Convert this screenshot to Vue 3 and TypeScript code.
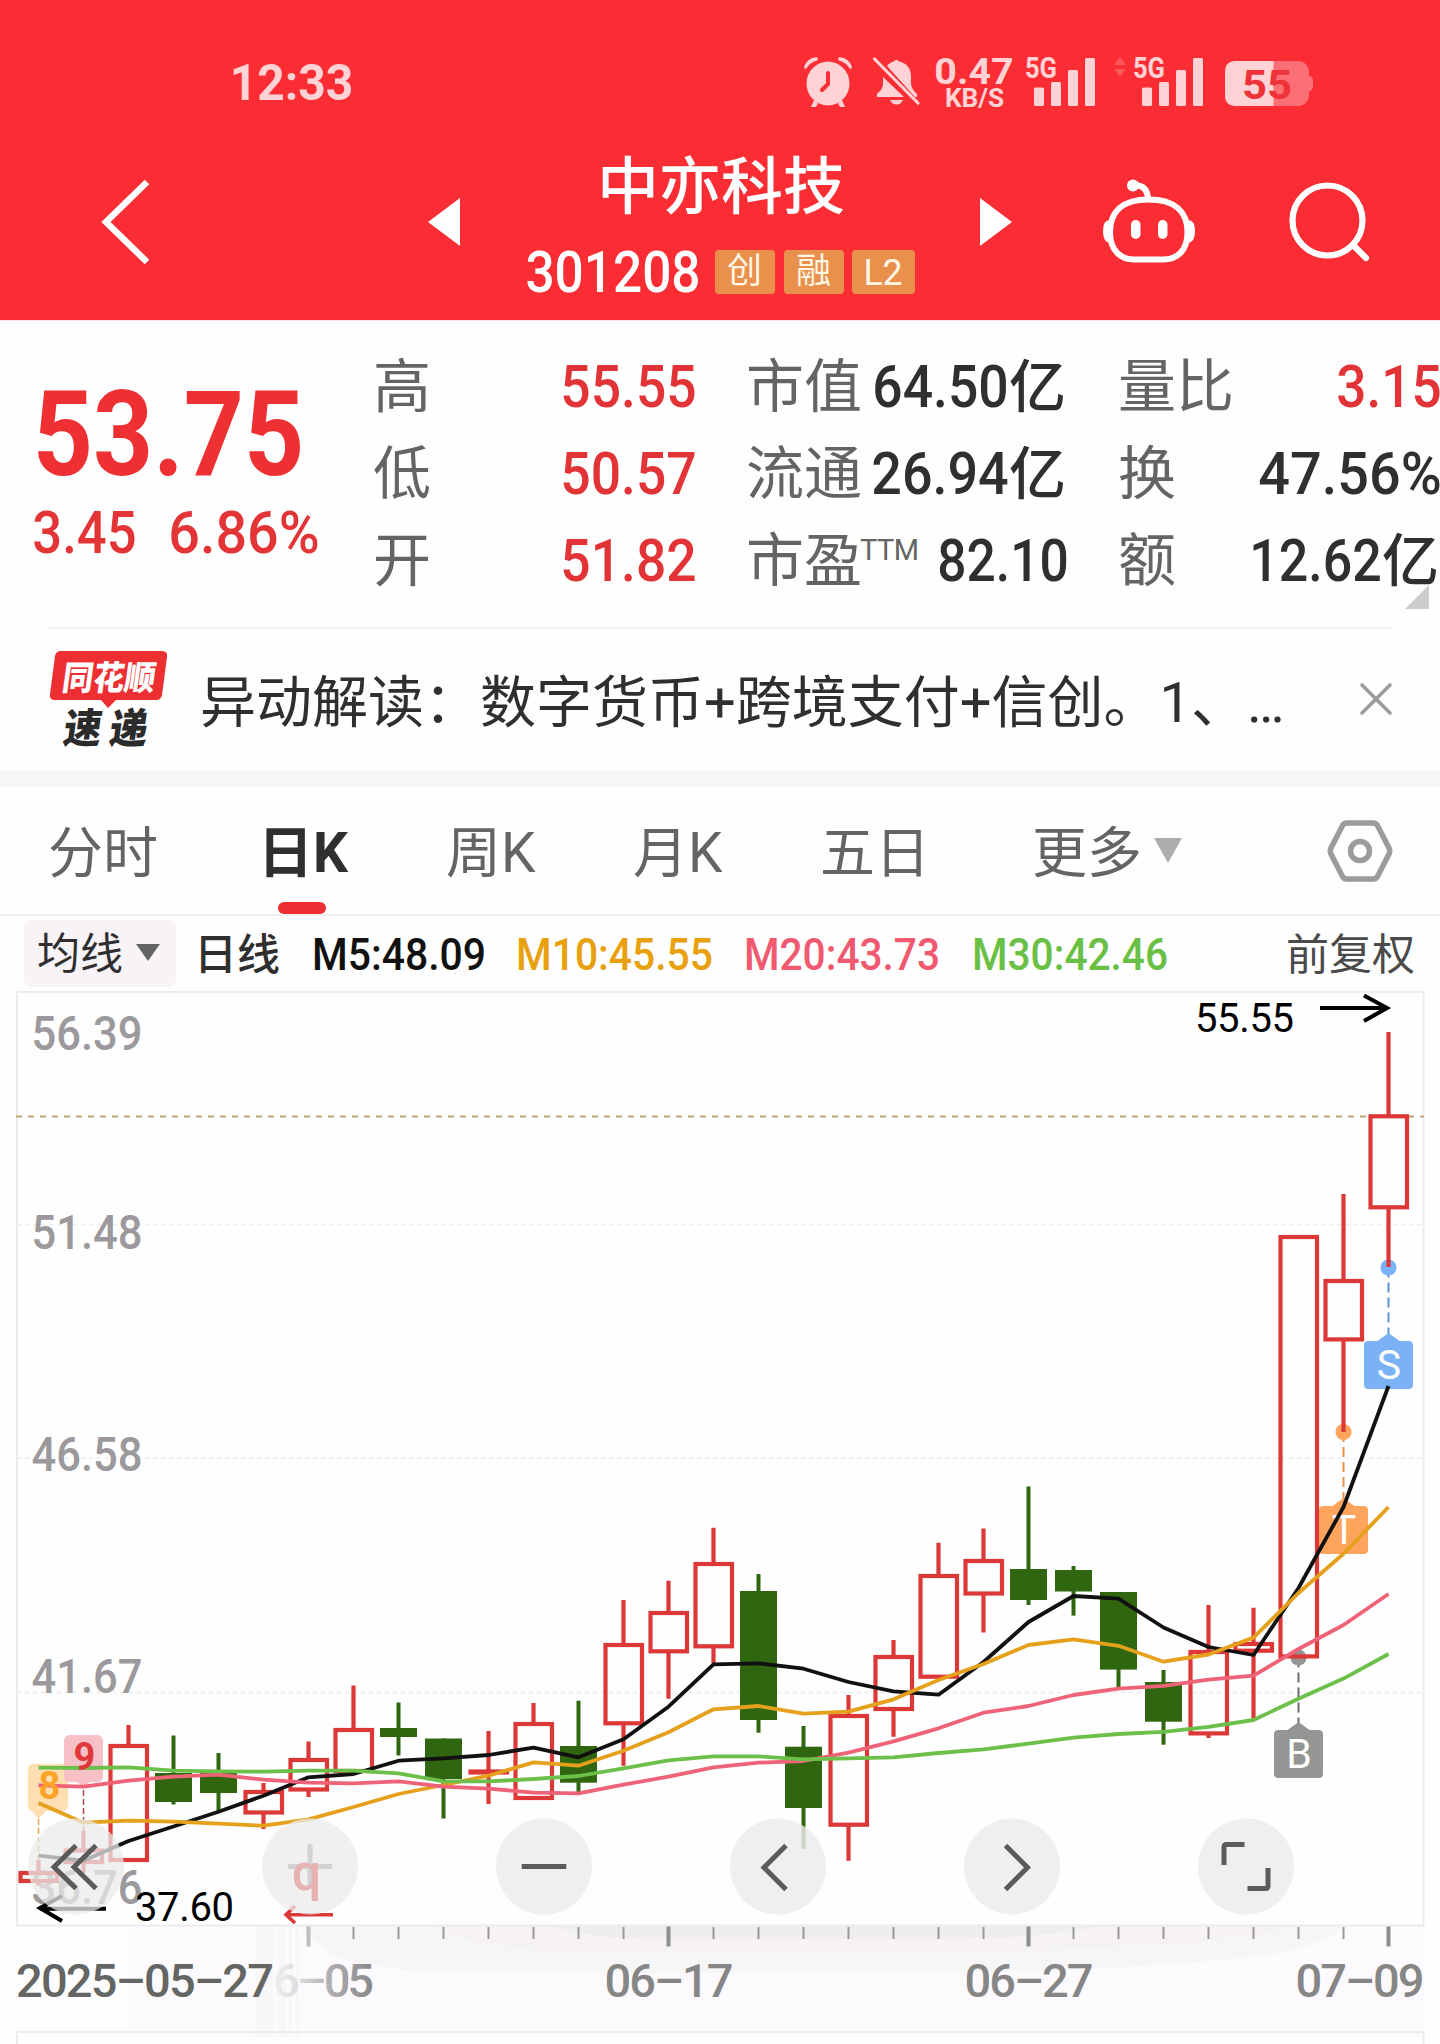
<script setup lang="ts">
import { h, type FunctionalComponent } from 'vue'

interface FitProps { text: string; w: number; size: number }

// Single line of Latin text set to an exact ink width; the box is the cap height.
const Fit: FunctionalComponent<FitProps> = (p) => {
  const cap = p.size * 0.711
  const side = p.size * 0.045
  return h('svg', { width: p.w, height: cap, style: { overflow: 'visible', display: 'inline-block', flex: 'none' } }, [
    h('text', {
      x: -side, y: cap, 'font-size': p.size, textLength: p.w + side * 2,
      lengthAdjust: 'spacingAndGlyphs', fill: 'currentColor',
    }, p.text),
  ])
}
Fit.props = ['text', 'w', 'size']

const highs = [
  { label: '高', value: '55.55' },
  { label: '低', value: '50.57' },
  { label: '开', value: '51.82' },
]
const caps = [
  { label: '市值', sup: '', value: '64.50', w: 131, unit: '亿' },
  { label: '流通', sup: '', value: '26.94', w: 132, unit: '亿' },
  { label: '市盈', sup: 'TTM', value: '82.10', w: 126, unit: '' },
]
const ratios = [
  { label: '量比', value: '3.15', w: 100, unit: '', up: true },
  { label: '换', value: '47.56%', w: 178, unit: '', up: false },
  { label: '额', value: '12.62', w: 127, unit: '亿', up: false },
]
const tabs = ['分时', '日K', '周K', '月K', '五日']
const averages = [
  { text: 'M5:48.09', w: 170, c: '#111111', gap: 34 },
  { text: 'M10:45.55', w: 193, c: '#e8a00c', gap: 35 },
  { text: 'M20:43.73', w: 192, c: '#f0596f', gap: 36 },
  { text: 'M30:42.46', w: 192, c: '#69c044', gap: 0 },
]

const px = (i: number): number => 38.5 + 45 * i

// [up, high, bodyTop, bodyBottom, low]
type Candle = [boolean, number, number, number, number]
const candles: Candle[] = [
  [true, 1860, 1871, 1883, 1885.5], [true, 1831, 1848.5, 1864, 1873], [true, 1725, 1744, 1862, 1862],
  [false, 1735.5, 1773, 1802, 1804.5], [false, 1753, 1773, 1793, 1811], [true, 1783, 1790, 1814.5, 1829],
  [true, 1741.5, 1758, 1791.5, 1797], [true, 1685.5, 1728, 1773, 1773], [false, 1702.5, 1728, 1737, 1755.5],
  [false, 1738.5, 1738.5, 1779, 1818.5], [true, 1731, 1769.5, 1774, 1804], [true, 1703, 1722, 1800, 1800],
  [false, 1700.7, 1746, 1782.7, 1792], [true, 1600, 1643, 1725.3, 1765.7], [true, 1580.7, 1611, 1653.3, 1698.7],
  [true, 1527.7, 1562, 1648.3, 1663], [false, 1574, 1591, 1720, 1732.7], [false, 1726, 1746.7, 1808, 1848.7],
  [true, 1695, 1714, 1826.7, 1860.7], [true, 1640, 1655, 1711, 1736.7], [true, 1542.7, 1574, 1678.7, 1678.7],
  [true, 1528.6, 1559, 1595.5, 1632.5], [false, 1486.5, 1569, 1600, 1605], [false, 1566, 1570, 1591.5, 1615.6],
  [false, 1592, 1592, 1669.6, 1687.5], [false, 1670, 1682, 1721.7, 1744.7], [true, 1605, 1650, 1735.4, 1738],
  [true, 1607.7, 1642, 1652.7, 1718], [true, 1235, 1235, 1658.4, 1658.4], [true, 1194, 1279, 1341.4, 1432],
  [true, 1032, 1114.3, 1209.3, 1267],
]

const lines: { c: string; ys: number[] }[] = [
  { c: '#111111', ys: [1855.7, 1860.7, 1841, 1826.5, 1811.7, 1795.7, 1777.3, 1774, 1760.7, 1758.3, 1755, 1747.6, 1757.3, 1739.3, 1706.7, 1664.3, 1663.3, 1668.7, 1682, 1691.3, 1694.7, 1662, 1622, 1596, 1598.7, 1627.5, 1647, 1655, 1588, 1507, 1386] },
  { c: '#e5a01c', ys: [1803, 1822.7, 1820.7, 1821.7, 1823.7, 1825.7, 1819.3, 1807, 1794, 1785, 1775.7, 1762.4, 1765.7, 1750.7, 1732.3, 1709.3, 1706, 1713.7, 1711.7, 1699.3, 1680, 1664, 1645, 1639.4, 1645.8, 1661.7, 1654.5, 1637.6, 1593, 1553.7, 1507] },
  { c: '#ef6378', ys: [1785.3, 1786.7, 1780.7, 1776.7, 1774.7, 1779.7, 1782.7, 1783.3, 1781.3, 1786.7, 1788.6, 1792.6, 1793.3, 1784.7, 1776.7, 1767.3, 1762.7, 1761, 1752.7, 1741.3, 1728.3, 1712.7, 1706, 1695, 1688.6, 1685.8, 1679.6, 1675.7, 1649, 1625, 1594] },
  { c: '#6cc04a', ys: [1767.7, 1768, 1767.3, 1770.7, 1771.3, 1771.7, 1770.7, 1770.7, 1773.3, 1781.3, 1781.4, 1779, 1776, 1768.3, 1760.3, 1756.3, 1756.3, 1759.3, 1758.3, 1757.3, 1753, 1749.4, 1743.7, 1737.6, 1734, 1731.8, 1726.8, 1720, 1698.7, 1678.6, 1654] },
]
const points = (ys: number[]): string => ys.map((y, i) => `${px(i)},${y}`).join(' ')

const signals = [
  { t: 'S', x: 1388.5, dot: 1267.5, top: 1341, fill: '#7bb1f5', dash: '#5b93d6' },
  { t: 'T', x: 1343.5, dot: 1432, top: 1506, fill: '#ffa45c', dash: '#e8924c' },
  { t: 'B', x: 1298.5, dot: 1657.5, top: 1730, fill: '#949694', dash: '#6d6d6d' },
]
const prices = [
  { t: '56.39', y: 1050 }, { t: '51.48', y: 1249 }, { t: '46.58', y: 1471 },
  { t: '41.67', y: 1693 }, { t: '36.76', y: 1904 },
]
const grid = [1224.5, 1458, 1692.5]
const ticks = Array.from({ length: 25 }, (_, k) => k + 6)
const dates = [
  { t: '06–17', x: 606 }, { t: '06–27', x: 966 }, { t: '07–09', x: 1297 },
]
const buttons = [76, 310, 544, 778, 1012, 1246]
</script>

<template>
  <div class="page">
    <header class="head">
      <div class="status">
        <Fit class="time" text="12:33" :w="119" :size="50" />
        <svg class="alarm" width="48" height="50" viewBox="0 0 48 50">
          <ellipse cx="24" cy="26.500" rx="21.500" ry="22" />
          <path d="M0 11 Q2 1 13 0 L14 3 Q5 6 2 12Z M48 11 Q46 1 35 0 L34 3 Q43 6 46 12Z" />
          <path d="M10 43 L7 50 H12 L14 46Z M38 43 L41 50 H36 L34 46Z" />
          <path d="M24 16 V27 L18 33" fill="none" stroke="#f92d33" stroke-width="4" stroke-linecap="round" stroke-linejoin="round" />
        </svg>
        <svg class="bell" width="48" height="50" viewBox="0 0 48 50">
          <path d="M10 20 L31 40 H4 Q3 37 6 35 Q10 32 10 26Z" />
          <path d="M14 9 Q17 5 21 4.500 Q23 1 26 4.500 Q38 7 38 20 V27 Q39 33 44 37 V40 H42Z" />
          <path d="M17 43 H30 Q28 47.500 23.500 47.500 Q19 47.500 17 43Z" />
          <path d="M1.500 2 L45 46" fill="none" stroke="#ffd3d5" stroke-width="3.200" stroke-linecap="round" />
        </svg>
        <div class="net">
          <Fit text="0.47" :w="76" :size="37" />
          <Fit text="KB/S" :w="57" :size="25" />
        </div>
        <svg class="sig" width="69" height="50" viewBox="0 0 69 50">
          <text x="-1" y="21" font-size="30" textLength="32" lengthAdjust="spacingAndGlyphs">5G</text>
          <rect x="8" y="30.500" width="10" height="18.500" rx="1.500" /><rect x="25" y="25" width="10" height="24" rx="1.500" />
          <rect x="42" y="13" width="10" height="36" rx="1.500" /><rect x="59" y="1" width="10" height="48" rx="1.500" />
        </svg>
        <svg class="updown" width="12" height="50" viewBox="0 0 12 50">
          <path d="M0 8 L6 0 L12 8Z M0 12 H12 L6 20Z" opacity=".25" />
        </svg>
        <svg class="sig second" width="69" height="50" viewBox="0 0 69 50">
          <text x="-1" y="21" font-size="30" textLength="32" lengthAdjust="spacingAndGlyphs">5G</text>
          <rect x="8" y="30.500" width="10" height="18.500" rx="1.500" /><rect x="25" y="25" width="10" height="24" rx="1.500" />
          <rect x="42" y="13" width="10" height="36" rx="1.500" /><rect x="59" y="1" width="10" height="48" rx="1.500" />
        </svg>
        <svg class="battery" width="88" height="50" viewBox="0 0 88 50">
          <rect x="0" y="4" width="84" height="45" rx="11" fill="#fb6e73" />
          <path d="M84 19 Q88 19 88 24 V29 Q88 34 84 34Z" fill="#fb6e73" />
          <path d="M48.500 4 H11 Q0 4 0 15 V38 Q0 49 11 49 H48.500Z" />
          <text x="17" y="41.500" font-size="41" textLength="50" lengthAdjust="spacingAndGlyphs" fill="#ee3239">55</text>
        </svg>
      </div>
      <div class="nav">
        <svg class="back" width="50" height="86" viewBox="0 0 50 86"><path d="M46 3 L5 43 L46 83" fill="none" stroke="#fff" stroke-width="6.500" /></svg>
        <svg class="prev" width="32" height="48" viewBox="0 0 32 48"><path d="M0 24 L32 0 V48Z" fill="#fff" /></svg>
        <div class="title">
          <div class="name">中亦科技</div>
          <div class="code">
            <Fit text="301208" :w="170" :size="57" />
            <span class="badge b1">创</span>
            <span class="badge b2">融</span>
            <span class="badge b3"><Fit text="L2" :w="36" :size="36" /></span>
          </div>
        </div>
        <svg class="next" width="32" height="48" viewBox="0 0 32 48"><path d="M32 24 L0 0 V48Z" fill="#fff" /></svg>
        <svg class="robot" width="94" height="86" viewBox="0 0 94 86">
          <g fill="none" stroke="#fff" stroke-width="6">
            <path d="M46.500 20.500 C20 20.500 8 33 8 53 C8 72 19 80.500 32 80.500 H61 C75 80.500 85.500 72 85.500 53 C85.500 33 73 20.500 46.500 20.500Z" />
            <path d="M32 6 Q46 6 46 21" />
          </g>
          <circle cx="31" cy="6.500" r="6" fill="#fff" />
          <path d="M8 41 Q1 41 1 52 Q1 63 8 64Z M86 41 Q93 41 93 52 Q93 63 86 64Z" fill="#fff" />
          <rect x="29" y="41" width="9.500" height="19" rx="4.700" fill="#fff" /><rect x="56" y="41" width="9.500" height="19" rx="4.700" fill="#fff" />
        </svg>
        <svg class="search" width="82" height="82" viewBox="0 0 82 82">
          <circle cx="38.500" cy="39.500" r="35" fill="none" stroke="#fff" stroke-width="6.200" />
          <path d="M64 64 L77 77" stroke="#fff" stroke-width="6.200" stroke-linecap="round" />
        </svg>
      </div>
    </header>

    <section class="quote">
      <div class="last">
        <Fit class="big" text="53.75" :w="261" :size="118" />
        <div class="chg">
          <Fit text="3.45" :w="99" :size="60" />
          <Fit text="6.86%" :w="146" :size="60" />
        </div>
      </div>
      <div class="col c1">
        <div v-for="r in highs" :key="r.label" class="cell">
          <span class="lab">{{ r.label }}</span>
          <Fit class="num up" :text="r.value" :w="131" :size="60" />
        </div>
      </div>
      <div class="col c2">
        <div v-for="r in caps" :key="r.label + r.value" class="cell">
          <span class="lab">{{ r.label }}<span v-if="r.sup" class="sup">{{ r.sup }}</span></span>
          <span class="val"><Fit class="num" :text="r.value" :w="r.w" :size="60" /><span v-if="r.unit" class="unit">{{ r.unit }}</span></span>
        </div>
      </div>
      <div class="col c3">
        <div v-for="r in ratios" :key="r.label" class="cell">
          <span class="lab">{{ r.label }}</span>
          <span class="val" :class="{ up: r.up }"><Fit class="num" :text="r.value" :w="r.w" :size="60" /><span v-if="r.unit" class="unit">{{ r.unit }}</span></span>
        </div>
      </div>
      <i class="corner"></i>
    </section>

    <section class="news">
      <svg class="logo" width="120" height="98" viewBox="0 0 120 98">
        <path d="M11 1 H112 Q118 1 117 7 L112 45 Q111 50 106 50 H66 L58 58 L51 50 H5 Q-1 50 0 44 L5 6 Q6 1 11 1Z" fill="#ee2f31" />
        <text x="0" y="0" transform="translate(11 39.500) skewX(-8)" font-size="34" textLength="93" lengthAdjust="spacingAndGlyphs" fill="#fff">同花顺</text>
        <text x="0" y="0" transform="translate(12 93) skewX(-8)" font-size="41" textLength="38" lengthAdjust="spacingAndGlyphs" fill="#2b2b2b">速</text>
        <text x="0" y="0" transform="translate(58 93) skewX(-8)" font-size="41" textLength="38" lengthAdjust="spacingAndGlyphs" fill="#2b2b2b">递</text>
      </svg>
      <span class="headline">异动解读：数字货币+跨境支付+信创。1、…</span>
      <svg class="close" width="32" height="32" viewBox="0 0 32 32"><path d="M2 2 L30 30 M30 2 L2 30" stroke="#9c9c9c" stroke-width="3.600" stroke-linecap="round" /></svg>
    </section>

    <nav class="tabs">
      <span v-for="(t, i) in tabs" :key="t" class="tab" :class="{ on: i === 1 }"><span class="word">{{ t }}</span></span>
      <span class="tab"><span class="word">更多</span><i class="tri"></i></span>
      <svg class="hex" width="66" height="62" viewBox="0 0 66 62">
        <path d="M20 3 H46 Q49 3 50.500 5.500 L62 28 Q63.500 31 62 34 L50.500 56.500 Q49 59 46 59 H20 Q17 59 15.500 56.500 L4 34 Q2.500 31 4 28 L15.500 5.500 Q17 3 20 3Z" fill="none" stroke="#9b9b9b" stroke-width="5.500" />
        <circle cx="33" cy="31" r="9.500" fill="none" stroke="#9b9b9b" stroke-width="5.500" />
      </svg>
    </nav>

    <section class="legend">
      <span class="pill">均线<i class="tri dark"></i></span>
      <span class="cycle">日线</span>
      <Fit v-for="m in averages" :key="m.text" :text="m.text" :w="m.w" :size="43.500" :style="{ color: m.c, marginRight: m.gap + 'px' }" />
      <span class="adjust">前复权</span>
    </section>

    <svg class="chart" width="1440" height="1053" viewBox="0 991 1440 1053">
      <rect x="127" y="1926" width="1297" height="111" fill="#fdfafd" />
      <g fill="#f6f6f6">
        <path d="M300 1926 H1345 Q1320 1950 1240 1958 Q1100 1972 960 1972 L480 1973 Q370 1972 330 1955Z" />
        <path d="M255 1926 H273 V2037 H255Z M279 1926 H286 V2037 H279Z M289 1926 H292 V2037 H289Z M296 1926 H299 V2037 H296Z" opacity=".8" />
      </g>
      <path d="M430 1926 H1300 Q1200 1950 960 1950 H560 Q470 1948 430 1926Z" fill="#f6f2f6" />
      <path d="M555 1926 H1100 Q1040 1938 960 1939 H640 Q580 1937 555 1926Z" fill="#eeeeee" />
      <g fill="none" stroke="#ececec" stroke-width="2">
        <rect x="17" y="992" width="1406.500" height="933.500" />
        <path d="M17 2050 V2032 H1423.500 V2050" />
        <line v-for="y in grid" :key="y" x1="17" x2="1423" :y1="y" :y2="y" stroke-width="1.500" stroke-dasharray="4 4" />
      </g>
      <line x1="16" x2="1424" y1="1116.500" y2="1116.500" stroke="#c2a379" stroke-width="1.800" stroke-dasharray="6 6" />

      <g class="price">
        <text v-for="p in prices" :key="p.t" x="31.500" :y="p.y" textLength="111" lengthAdjust="spacingAndGlyphs">{{ p.t }}</text>
      </g>

      <g>
        <path d="M34 1764 H62 Q68 1764 68 1770 V1805 Q68 1811 62 1811 H46 L38.500 1819 L32 1811 Q28 1811 28 1805 V1770 Q28 1764 34 1764Z" fill="#ffdfb2" />
        <path d="M70 1735 H97 Q103 1735 103 1741 V1776 Q103 1782 97 1782 H90 L83.500 1788 L77 1782 H70 Q64 1782 64 1776 V1741 Q64 1735 70 1735Z" fill="#f7c0c6" />
        <path d="M38.500 1819 V1860" stroke="#e0a94e" stroke-width="1.500" stroke-dasharray="6 3" />
        <path d="M83.500 1790 V1831" stroke="#a8454f" stroke-width="1.500" stroke-dasharray="6 3" />
      </g>

      <g v-for="s in signals" :key="s.t">
        <path :d="`M${s.x} ${s.dot} V${s.top - 7}`" :stroke="s.dash" stroke-width="2" stroke-dasharray="10 5" />
        <circle :cx="s.x" :cy="s.dot" r="8" :fill="s.fill" />
        <path :d="`M${s.x - 20} ${s.top} H${s.x - 11} L${s.x} ${s.top - 8} L${s.x + 11} ${s.top} H${s.x + 20} Q${s.x + 24.5} ${s.top} ${s.x + 24.5} ${s.top + 4} V${s.top + 44} Q${s.x + 24.5} ${s.top + 48} ${s.x + 20} ${s.top + 48} H${s.x - 20} Q${s.x - 24.5} ${s.top + 48} ${s.x - 24.5} ${s.top + 44} V${s.top + 4} Q${s.x - 24.5} ${s.top} ${s.x - 20} ${s.top}Z`" :fill="s.fill" />
        <text :x="s.x + 0.5" :y="s.top + 38" text-anchor="middle" font-size="41" fill="#fff">{{ s.t }}</text>
      </g>

      <g v-for="(c, i) in candles" :key="i">
        <g v-if="c[0]" stroke="#dd3838" stroke-width="4.200" fill="none">
          <path :d="`M${px(i)} ${c[1]} V${c[2] + 1} M${px(i)} ${c[3] - 1} V${c[4]}`" />
          <rect :x="px(i) - 18" :y="c[2] + 2" width="36.500" :height="Math.max(c[3] - c[2] - 4, 1)" />
        </g>
        <g v-else fill="#316611">
          <rect :x="px(i) - 18.500" :y="c[2]" width="37" :height="c[3] - c[2]" />
          <rect :x="px(i) - 2" :y="c[1]" width="4" :height="c[4] - c[1]" />
        </g>
      </g>

      <polyline v-for="l in lines" :key="l.c" :points="points(l.ys)" fill="none" :stroke="l.c" stroke-width="3.800" stroke-linejoin="round" />
      <text x="49.500" y="1799" text-anchor="middle" font-size="38" font-weight="700" fill="#fba428">8</text>
      <text x="84.500" y="1770" text-anchor="middle" font-size="38" font-weight="700" fill="#df383b">9</text>

      <g fill="none" stroke="#000" stroke-width="4">
        <path d="M1320 1008 H1388 M1364 995.500 L1387 1008 L1364 1021" />
        <path d="M106 1908.700 H40 M62 1896 L40 1908 L62 1921" />
      </g>
      <g fill="#000" font-size="40">
        <text x="1195" y="1032" textLength="99" lengthAdjust="spacing">55.55</text>
        <text x="135" y="1920.500" textLength="99" lengthAdjust="spacing">37.60</text>
      </g>
      <path d="M333 1914.700 H287 M295 1906 L286 1914.700 L295 1923" fill="none" stroke="#dd3838" stroke-width="3.600" />

      <path d="M310 1844 V1889 M288 1866.500 H332" stroke="#8a8a8a" stroke-width="5" />
      <text x="306.500" y="1889.500" text-anchor="middle" font-size="52" font-weight="500" fill="#dd1010">q</text>
      <circle v-for="x in buttons" :key="x" :cx="x" cy="1866.500" r="48" fill="#ebebeb" fill-opacity=".74" />
      <circle v-for="x in buttons.slice(2)" :key="'o' + x" :cx="x" cy="1866.500" r="48" fill="#eeeeee" fill-opacity=".3" />
      <g fill="none" stroke="#5b5b5b" stroke-width="5">
        <path d="M76 1845.500 L54 1867 L76 1888.500 M96 1845.500 L74 1867 L96 1888.500" />
        <path d="M521.700 1866.500 H566.300" />
        <path d="M786 1845.500 L764 1867.500 L786 1889.500" />
        <path d="M1005.500 1845.500 L1027.500 1867.500 L1005.500 1889.500" />
        <path d="M1224 1865 V1847 Q1224 1844.500 1226.500 1844.500 H1244.500 M1247.500 1888.500 H1265.500 Q1268 1888.500 1268 1886 V1868" />
      </g>

      <template v-for="i in ticks" :key="i">
        <rect v-if="i % 8 === 6" :x="px(i) - 2" y="1926.500" width="4" height="20" :fill="i === 6 ? '#bdbdbd' : '#8e8e8e'" />
        <rect v-else :x="px(i) - 1" y="1927" width="2" height="12" fill="#999" />
      </template>
      <defs>
        <linearGradient id="fade" gradientUnits="userSpaceOnUse" x1="272" y1="0" x2="372" y2="0">
          <stop offset="0" stop-color="#efefef" /><stop offset=".25" stop-color="#dedede" />
          <stop offset=".6" stop-color="#acacac" /><stop offset="1" stop-color="#8a8a8a" />
        </linearGradient>
      </defs>
      <g class="dates">
        <text x="16" y="1996.500" textLength="258" fill="#646664">2025–05–27</text>
        <text x="273" y="1996.500" textLength="101" fill="url(#fade)">6–05</text>
        <text v-for="d in dates" :key="d.t" :x="d.x - 1.5" y="1996.500" textLength="129" fill="#868686">{{ d.t }}</text>
      </g>
    </svg>
  </div>
</template>

<style>
body { margin: 0; background: #fff; }
</style>

<style scoped>
.page { width: 1440px; height: 2044px; overflow: hidden; background: #fefefe; font-family: Roboto, "Noto Sans CJK SC", sans-serif; color: #2f2f2f; }
svg { display: block; flex: none; overflow: visible; }
.head { height: 320px; background: #f92d33; border-bottom: 1px solid #fde3e5; color: #fff; }
.status { display: flex; align-items: center; height: 50px; padding-top: 57px; fill: #ffd3d5; color: #ffd3d5; font-weight: 700; }
.time { margin-left: 232px; }
.alarm { margin-left: 453px; }
.bell { margin-left: 21px; }
.net { margin-left: 15px; width: 76px; height: 49px; display: flex; flex-direction: column; justify-content: space-between; align-items: center; }
.sig { margin-left: 14px; }
.updown { margin-left: 19px; }
.sig.second { margin-left: 8px; }
.battery { margin-left: 22px; }
.nav { display: flex; align-items: center; height: 195px; padding-top: 17px; }
.back { margin-left: 101px; }
.prev { margin-left: 277px; }
.title { margin-left: 68px; width: 386px; height: 144px; display: flex; flex-direction: column; justify-content: space-between; align-items: center; }
.name { font-size: 62px; line-height: 62px; font-weight: 500; padding-top: 7px; }
.code { display: flex; align-items: center; font-weight: 500; }
.badge { height: 44px; width: 60px; border-radius: 4px; background: #e8904c; color: #fff6e4; font-size: 35px; line-height: 45px; font-weight: 400; display: flex; align-items: center; justify-content: center; margin-left: 9px; }
.b1 { margin-left: 17px; }
.b3 { width: 63px; margin-left: 8px; }
.next { margin-left: 66px; }
.robot { margin-left: 90px; }
.search { margin-left: 93px; }

.quote { position: relative; display: flex; height: 306px; }
.last { width: 373px; color: #e33437; font-weight: 500; display: flex; flex-direction: column; padding-top: 70px; box-sizing: border-box; }
.big { margin-left: 38px; color: #ee3032; font-weight: 700; }
.chg { display: flex; gap: 37px; padding-left: 35px; margin-top: 35px; }
.col { padding-top: 23px; }
.c1 { width: 321px; }
.c2 { width: 320px; margin-left: 52px; }
.c3 { width: 321px; margin-left: 52px; }
.cell { display: flex; justify-content: space-between; align-items: baseline; height: 87px; line-height: 87px; white-space: nowrap; }
.lab { font-size: 58px; color: #636563; font-weight: 400; }
.sup { display: inline-block; font-size: 29px; vertical-align: 21px; line-height: 1; letter-spacing: -0.5px; margin-left: -2px; }
.num { margin-bottom: 2px; font-weight: 500; }
.up { color: #e23437; }
.val { display: inline-flex; align-items: baseline; }
.unit { font-size: 57px; font-weight: 500; margin-left: 3px; }
.corner { position: absolute; right: 11px; top: 264px; border-style: solid; border-width: 0 0 24px 24px; border-color: transparent transparent #cdcdcd transparent; }

.news { height: 142px; margin: 0 48px; border-top: 2px solid #efefef; display: flex; align-items: center; }
.logo { margin-left: 2px; margin-top: -3px; font-weight: 900; font-family: "Noto Sans CJK SC", sans-serif; }
.headline { margin-left: 30px; margin-top: 5px; width: 1101px; font-size: 56px; line-height: 64px; white-space: nowrap; }
.close { margin-left: 60px; margin-top: -2px; }

.tabs { display: grid; grid-template-columns: 208px 190px 187px 187px 212px 295px 66px; align-items: center; height: 127px; padding-left: 48px; border-top: 16px solid #f7f7f7; border-bottom: 2px solid #efefef; }
.tab { position: relative; font-size: 55px; line-height: 127px; height: 127px; color: #636563; font-weight: 400; display: flex; align-items: center; }
.word { padding-top: 6px; }
.tab.on { color: #2f2f2f; font-weight: 700; }
.tab.on .word { margin-left: 2px; }
.tab.on::after { content: ""; position: absolute; left: 22px; bottom: 0; width: 48px; height: 12px; border-radius: 6px; background: #ee2f31; }
.tri { border-style: solid; border-width: 25px 14px 0; border-color: #adadad transparent transparent; margin-left: 12px; }
.tri.dark { border-width: 17px 12px 0; border-color: #646464 transparent transparent; margin-left: 13px; margin-top: -4px; }

.legend { display: flex; align-items: center; height: 75px; padding: 2px 25px 0 24px; box-sizing: border-box; font-weight: 500; }
.pill { width: 152px; height: 67px; border-radius: 8px; background: #f7f3f7; display: flex; align-items: center; font-size: 43px; line-height: 60px; padding: 2px 0 0 13px; margin-top: -3px; box-sizing: border-box; font-weight: 400; }
.cycle { margin-left: 18px; margin-right: 34px; font-size: 43px; line-height: 60px; }
.adjust { margin-left: auto; font-size: 43px; line-height: 60px; font-weight: 400; color: #4a4a4a; }
.price { font-size: 48px; font-weight: 500; fill: #9b999b; }
.dates { font-size: 47px; font-weight: 500; }
</style>
